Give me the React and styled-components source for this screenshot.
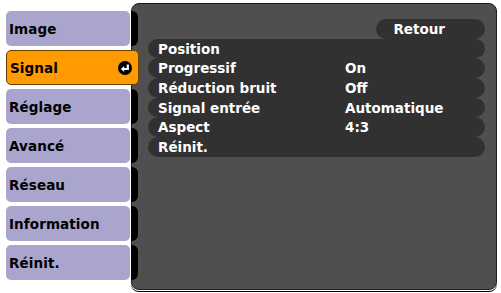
import React from 'react';
import styled, { createGlobalStyle } from 'styled-components';

const GlobalStyle = createGlobalStyle`
  html, body {
    margin: 0;
    padding: 0;
    background: #ffffff;
  }
  body {
    font-family: "DejaVu Sans", Verdana, sans-serif;
  }
`;

const Screen = styled.div`
  display: flex;
  align-items: flex-start;
  width: 501px;
  height: 293px;
  padding: 3px 0 0 6px;
  box-sizing: border-box;
  overflow: hidden;
`;

const Sidebar = styled.nav`
  display: flex;
  flex-direction: column;
  gap: 4px;
  padding-top: 8px;
  margin-right: -8px;
  position: relative;
  z-index: 1;
`;

const TabRow = styled.div`
  display: flex;
  align-items: stretch;
  height: 35px;
`;

const TabLabel = styled.div`
  display: flex;
  align-items: center;
  justify-content: space-between;
  box-sizing: border-box;
  width: ${({ active }) => (active ? '133px' : '124px')};
  padding: 0 6px 0 3px;
  border-radius: 5px;
  background: ${({ active }) => (active ? '#ff9a00' : '#a9a5cc')};
  border: ${({ active }) => (active ? '1px solid #6a4200' : 'none')};
  color: #000;
  font-weight: bold;
  font-size: 13.5px;
  letter-spacing: 0.1px;
`;

const Notch = styled.div`
  width: 7px;
  margin-left: 1px;
  background: #000;
  border-radius: 0 6px 6px 0;
`;

const Panel = styled.section`
  width: 366px;
  height: 287px;
  box-sizing: border-box;
  background: #4f4f4f;
  border: 1px solid #1e1e1e;
  border-radius: 8px;
  box-shadow: 0 1px 0 #ffffff, 0 2px 0 #000000;
  padding: 15px 11px 0 16px;
  display: flex;
  flex-direction: column;
`;

const BackRow = styled.div`
  display: flex;
  justify-content: flex-end;
`;

const BackButton = styled.div`
  width: 109px;
  height: 19.7px;
  box-sizing: border-box;
  border-radius: 10px;
  background: #313131;
  color: #fff;
  font-weight: bold;
  font-size: 13.5px;
  display: flex;
  align-items: center;
  justify-content: flex-end;
  padding-right: 40px;
`;

const MenuRow = styled.div`
  display: grid;
  grid-template-columns: 187px 1fr;
  align-items: center;
  height: 19.7px;
  padding-left: 10px;
  border-radius: 10px;
  background: #313131;
  color: #fff;
  font-weight: bold;
  font-size: 13.5px;
  white-space: nowrap;
`;

const EnterIcon = () => (
  <svg width="14" height="14" viewBox="0 0 14 14">
    <circle cx="7" cy="7" r="7" fill="#000" />
    <path
      d="M9.8 3.4 V8 H5.4"
      fill="none"
      stroke="#fff"
      strokeWidth="2.2"
    />
    <path d="M2.8 8 L6.2 5 V11 Z" fill="#fff" />
  </svg>
);

const tabs = ['Image', 'Signal', 'Réglage', 'Avancé', 'Réseau', 'Information', 'Réinit.'];

const rows = [
  ['Position', ''],
  ['Progressif', 'On'],
  ['Réduction bruit', 'Off'],
  ['Signal entrée', 'Automatique'],
  ['Aspect', '4:3'],
  ['Réinit.', ''],
];

export default function App() {
  return (
    <>
      <GlobalStyle />
      <Screen>
        <Sidebar>
          {tabs.map((t) => {
            const active = t === 'Signal';
            return (
              <TabRow key={t}>
                <TabLabel active={active}>
                  <span>{t}</span>
                  {active && <EnterIcon />}
                </TabLabel>
                {!active && <Notch />}
              </TabRow>
            );
          })}
        </Sidebar>
        <Panel>
          <BackRow>
            <BackButton>Retour</BackButton>
          </BackRow>
          {rows.map(([label, value]) => (
            <MenuRow key={label}>
              <span>{label}</span>
              <span>{value}</span>
            </MenuRow>
          ))}
        </Panel>
      </Screen>
    </>
  );
}
